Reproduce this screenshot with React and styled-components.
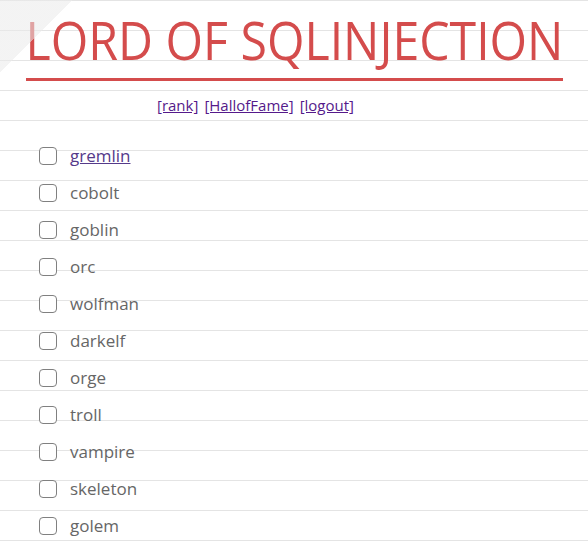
import React from "react";
import styled, { createGlobalStyle } from "styled-components";

const GlobalStyle = createGlobalStyle`
  body {
    margin: 0;
    background-color: #fff;
    background-image: linear-gradient(#e4e4e4 1px, transparent 1px);
    background-size: 100% 30px;
    font-family: "Open Sans", "Noto Sans", sans-serif;
  }
`;

const monsters = [
  "gremlin",
  "cobolt",
  "goblin",
  "orc",
  "wolfman",
  "darkelf",
  "orge",
  "troll",
  "vampire",
  "skeleton",
  "golem",
];

const App = () => {
  return (
    <>
      <GlobalStyle />
      <Page>
        <Header>
          <Title>LORD OF SQLINJECTION</Title>
        </Header>
        <Corner />
        <Menu>
          <MenuLink href="#">[rank]</MenuLink>
          <MenuLink href="#">[HallofFame]</MenuLink>
          <MenuLink href="#">[logout]</MenuLink>
        </Menu>
        <List>
          {monsters.map((name, i) => (
            <Item key={name}>
              <Check type="checkbox" />
              {i === 0 ? <Current href="#">{name}</Current> : <Name>{name}</Name>}
            </Item>
          ))}
        </List>
      </Page>
    </>
  );
};

const Page = styled.div`
  position: relative;
  width: 588px;
  height: 542px;
  overflow: hidden;
`;

// folded paper corner over the title
const Corner = styled.div`
  position: absolute;
  top: 0;
  left: 0;
  width: 73px;
  height: 73px;
  background: linear-gradient(135deg, rgba(234, 234, 234, 0.55) 50%, transparent 50%);
  pointer-events: none;
`;

const Header = styled.div`
  display: flex;
  justify-content: center;
  margin: 0 25px 0 26px;
  border-bottom: 3px solid #d44c4c;
  padding-top: 9px;
  height: 81px;
  box-sizing: border-box;
`;

const Title = styled.h1`
  margin: 0;
  font-family: "Open Sans", sans-serif;
  font-weight: 400;
  font-size: 53px;
  line-height: 62px;
  color: #d44c4c;
  white-space: nowrap;
  transform: scaleX(0.91);
  transform-origin: center;
`;

const Menu = styled.div`
  display: flex;
  gap: 6px;
  padding-left: 157px;
  margin-top: 13px;
  height: 22px;
  align-items: center;
  font-size: 15px;
`;

const MenuLink = styled.a`
  color: #551a8b;
`;

const List = styled.ul`
  list-style: none;
  margin: 21px 0 0;
  padding: 0 0 0 39px;
`;

const Item = styled.li`
  display: flex;
  align-items: center;
  gap: 13px;
  height: 37px;
  font-size: 17px;
`;

const Check = styled.input`
  appearance: none;
  margin: 0;
  width: 18px;
  height: 18px;
  border: 1.5px solid #808080;
  border-radius: 4px;
  box-sizing: border-box;
  background: #fff;
`;

const Name = styled.span`
  color: #666;
`;

const Current = styled.a`
  color: #553a8a;
`;

export default App;
